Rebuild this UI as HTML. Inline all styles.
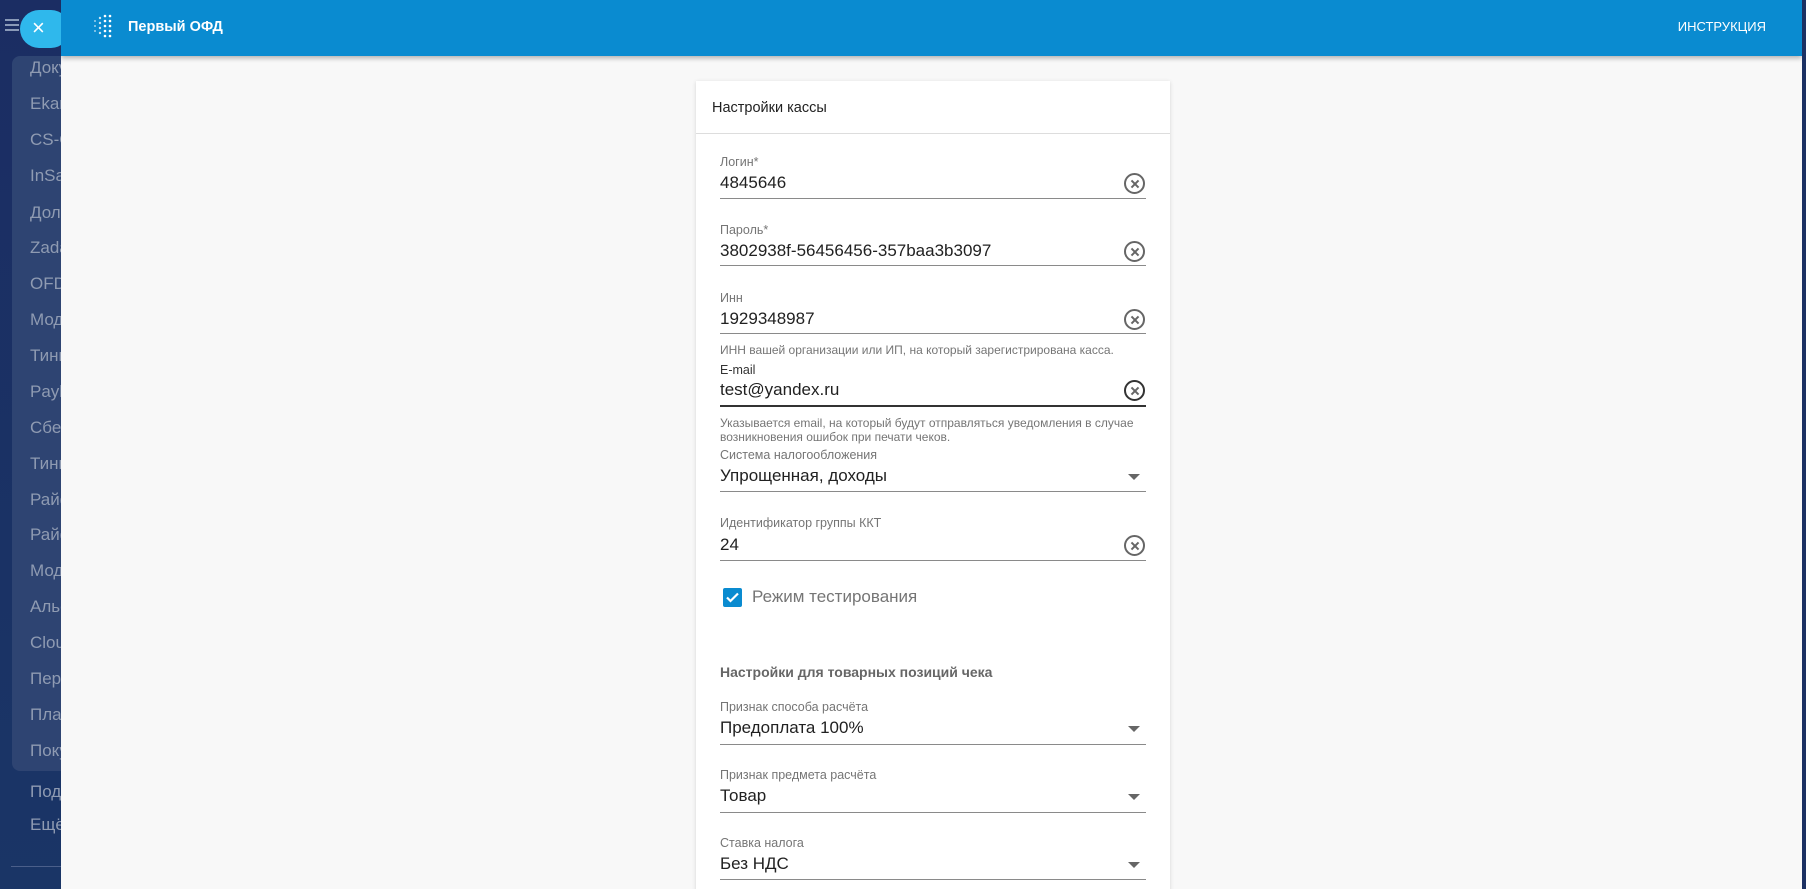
<!DOCTYPE html>
<html><head><meta charset="utf-8"><style>
*{margin:0;padding:0;box-sizing:border-box}
body{width:1806px;height:889px;overflow:hidden;position:relative;background:#1c3163;font-family:"Liberation Sans","Noto Sans CJK SC",sans-serif}
.sb{position:absolute;left:0;top:0;width:61px;height:889px;background:linear-gradient(180deg,#1b2d63,#1a3566)}
.panel{position:absolute;left:12px;top:56px;width:60px;height:715px;background:#2e4472;border-radius:8px}
.it{position:absolute;left:30px;font-size:17px;color:#8f9bb2;white-space:nowrap;line-height:20px}
.main{position:absolute;left:61px;top:0;width:1741px;height:889px;background:#f8f8f8;overflow:hidden}
.hdr{position:absolute;left:0;top:0;width:100%;height:56px;background:#0a8bd0;box-shadow:0 2px 5px rgba(0,0,0,.3)}
.card{position:absolute;left:635px;top:81px;width:474px;height:820px;background:#fff;box-shadow:0 1px 4px rgba(0,0,0,.15)}
.lb{position:absolute;left:85px;font-size:12.5px;color:#757575;line-height:16px;white-space:nowrap}
.vl{position:absolute;left:85px;font-size:17px;color:#212121;line-height:22px;white-space:nowrap}
.ln{position:absolute;left:85px;width:426px;height:1px;background:#8a8a8a}
.x{position:absolute;left:488px;width:21px;height:21px;border:2px solid #666;border-radius:50%}
.x:before,.x:after{content:"";position:absolute;left:3.5px;top:7.5px;width:10px;height:2px;background:#666;transform:rotate(45deg)}
.x:after{transform:rotate(-45deg)}
.ar{position:absolute;left:493px;width:0;height:0;border-left:6px solid transparent;border-right:6px solid transparent;border-top:6px solid #666}
.hp{position:absolute;left:85px;font-size:12px;color:#757575;line-height:15px;white-space:nowrap}
</style></head><body>
<div class="sb"></div>
<div class="panel"></div>
<div style="position:absolute;left:5px;top:19px;width:14px;height:2px;background:#8a9ab8;box-shadow:0 5px 0 #8a9ab8,0 10px 0 #8a9ab8"></div>
<div class="it" style="top:58px">Документы</div>
<div class="it" style="top:94px">Ekam</div>
<div class="it" style="top:130px">CS-Cart</div>
<div class="it" style="top:166px">InSales</div>
<div class="it" style="top:203px">Долг</div>
<div class="it" style="top:238px">Zadarma</div>
<div class="it" style="top:274px">OFD</div>
<div class="it" style="top:310px">Модуль</div>
<div class="it" style="top:346px">Тинькофф</div>
<div class="it" style="top:382px">Paybox</div>
<div class="it" style="top:418px">Сбербанк</div>
<div class="it" style="top:454px">Тинькофф</div>
<div class="it" style="top:490px">Райффайзен</div>
<div class="it" style="top:525px">Райффайзен</div>
<div class="it" style="top:561px">Модуль</div>
<div class="it" style="top:597px">Альфа</div>
<div class="it" style="top:633px">Cloud</div>
<div class="it" style="top:669px">Первый</div>
<div class="it" style="top:705px">Платёж</div>
<div class="it" style="top:741px">Покупка</div>
<div class="it" style="top:782px">Подписки</div>
<div class="it" style="top:815px">Ещё</div>
<div style="position:absolute;left:11px;top:866px;width:50px;height:1px;background:#4b5f8a"></div>
<div style="position:absolute;left:20px;top:10px;width:50px;height:38px;border-radius:19px;background:#2fb8ec"></div>
<div style="position:absolute;left:32px;top:16px;font-size:22px;color:#fff;line-height:24px">×</div>
<div class="main">
 <div class="hdr">
  <svg style="position:absolute;left:32px;top:13px" width="22" height="26" viewBox="0 0 22 26" fill="#fff">
   <g opacity=".6"><circle cx="2" cy="8" r="1"/><circle cx="2" cy="13" r="1"/><circle cx="2" cy="18" r="1"/></g>
   <g opacity=".8"><circle cx="7" cy="5" r="1.2"/><circle cx="7" cy="10" r="1.2"/><circle cx="7" cy="15" r="1.2"/><circle cx="7" cy="20" r="1.2"/></g>
   <circle cx="12" cy="3" r="1.3"/><circle cx="12" cy="8" r="1.3"/><circle cx="12" cy="13" r="1.3"/><circle cx="12" cy="18" r="1.3"/><circle cx="12" cy="23" r="1.3"/>
   <circle cx="17" cy="3" r="1.3"/><circle cx="17" cy="8" r="1.3"/><circle cx="17" cy="13" r="1.3"/><circle cx="17" cy="18" r="1.3"/><circle cx="17" cy="23" r="1.3"/>
  </svg>
  <div style="position:absolute;left:67px;top:17px;font-size:14.5px;font-weight:bold;color:#fff;line-height:20px">Первый ОФД</div>
  <div style="position:absolute;right:36px;top:18px;font-size:13px;color:#fff;line-height:18px">ИНСТРУКЦИЯ</div>
 </div>
 <div class="card">
  <div style="position:absolute;left:16px;top:18px;font-size:14.5px;color:#212121;line-height:18px">Настройки кассы</div>
  <div style="position:absolute;left:0;top:52px;width:100%;height:1px;background:#ddd"></div>

  <div class="lb" style="top:73px;left:24px">Логин*</div>
  <div class="vl" style="top:91px;left:24px">4845646</div>
  <div class="ln" style="top:117px;left:24px"></div>
  <div class="x" style="top:92px;left:428px"></div>

  <div class="lb" style="top:141px;left:24px">Пароль*</div>
  <div class="vl" style="top:159px;left:24px">3802938f-56456456-357baa3b3097</div>
  <div class="ln" style="top:184px;left:24px"></div>
  <div class="x" style="top:160px;left:428px"></div>

  <div class="lb" style="top:209px;left:24px">Инн</div>
  <div class="vl" style="top:227px;left:24px">1929348987</div>
  <div class="ln" style="top:252px;left:24px"></div>
  <div class="x" style="top:228px;left:428px"></div>
  <div class="hp" style="top:262px;left:24px">ИНН вашей организации или ИП, на который зарегистрирована касса.</div>

  <div class="lb" style="top:281px;left:24px;color:#333">E-mail</div>
  <div class="vl" style="top:298px;left:24px">test@yandex.ru</div>
  <div class="ln" style="top:324px;left:24px;height:2px;background:#333"></div>
  <div class="x" style="top:299px;left:428px;border-color:#333"></div>
  <div class="hp" style="top:335px;left:24px">Указывается email, на который будут отправляться уведомления в случае</div>
  <div class="hp" style="top:349px;left:24px">возникновения ошибок при печати чеков.</div>

  <div class="lb" style="top:366px;left:24px">Система налогообложения</div>
  <div class="vl" style="top:384px;left:24px">Упрощенная, доходы</div>
  <div class="ln" style="top:410px;left:24px"></div>
  <div class="ar" style="top:393px;left:432px"></div>

  <div class="lb" style="top:434px;left:24px">Идентификатор группы ККТ</div>
  <div class="vl" style="top:453px;left:24px">24</div>
  <div class="ln" style="top:479px;left:24px"></div>
  <div class="x" style="top:454px;left:428px"></div>

  <div style="position:absolute;left:27px;top:507px;width:19px;height:19px;background:#0a8bd0;border-radius:2px"></div>
  <svg style="position:absolute;left:27px;top:507px" width="19" height="19"><path d="M4 9.5l3.5 3.5 7.5-7.5" stroke="#fff" stroke-width="2.2" fill="none"/></svg>
  <div style="position:absolute;left:56px;top:505px;font-size:17px;color:#757575;line-height:22px">Режим тестирования</div>

  <div style="position:absolute;left:24px;top:582px;font-size:14px;font-weight:bold;color:#666;line-height:18px">Настройки для товарных позиций чека</div>

  <div class="lb" style="top:618px;left:24px">Признак способа расчёта</div>
  <div class="vl" style="top:636px;left:24px">Предоплата 100%</div>
  <div class="ln" style="top:663px;left:24px"></div>
  <div class="ar" style="top:645px;left:432px"></div>

  <div class="lb" style="top:686px;left:24px">Признак предмета расчёта</div>
  <div class="vl" style="top:704px;left:24px">Товар</div>
  <div class="ln" style="top:731px;left:24px"></div>
  <div class="ar" style="top:713px;left:432px"></div>

  <div class="lb" style="top:754px;left:24px">Ставка налога</div>
  <div class="vl" style="top:772px;left:24px">Без НДС</div>
  <div class="ln" style="top:798px;left:24px"></div>
  <div class="ar" style="top:781px;left:432px"></div>
 </div>
</div>
</body></html>
